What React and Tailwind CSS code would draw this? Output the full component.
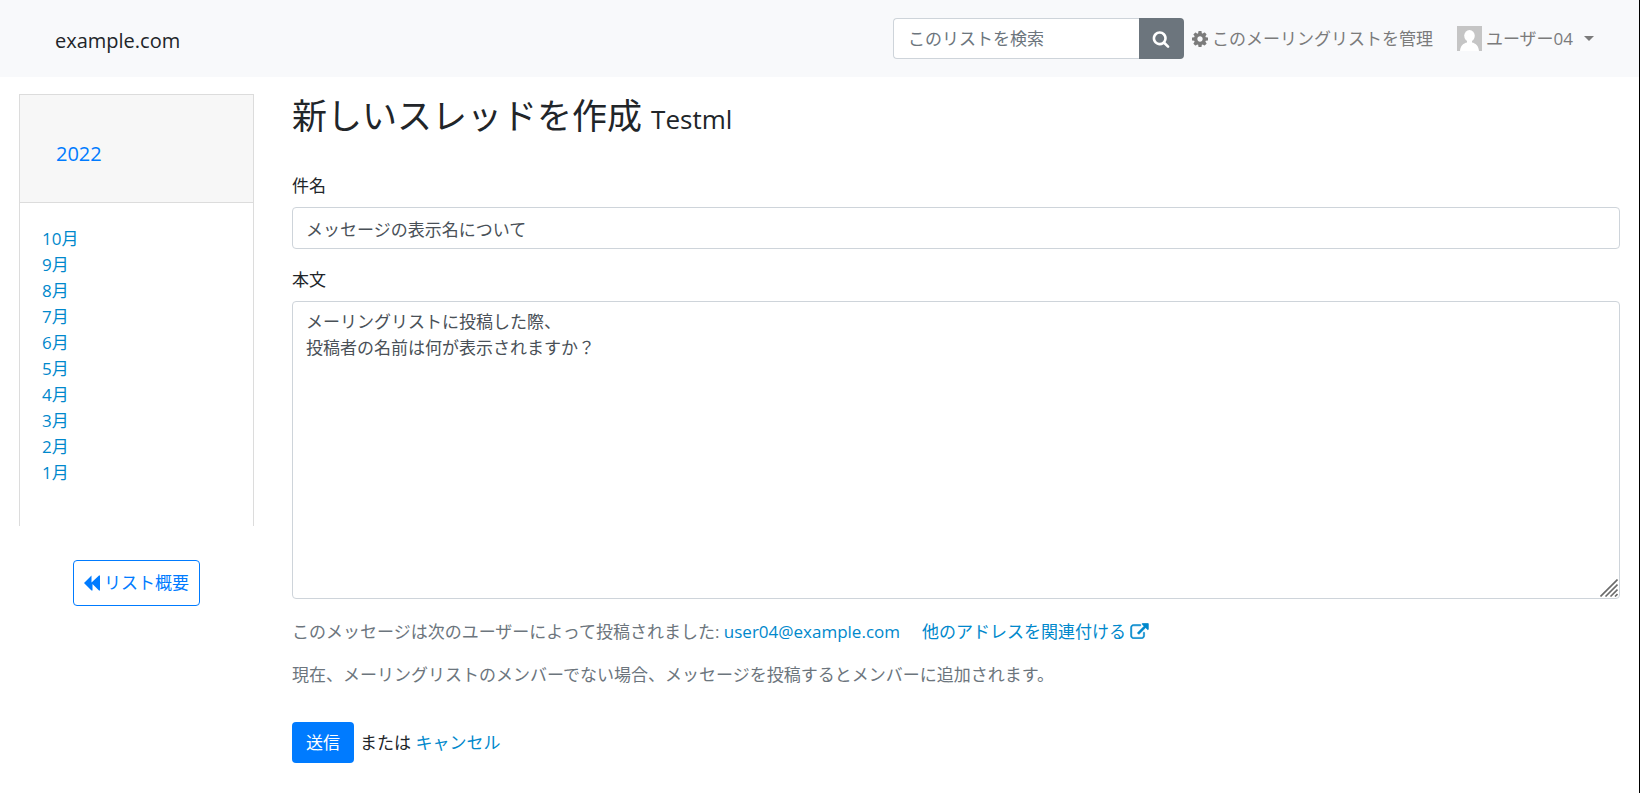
import React, { useState } from 'react';

const months = [10, 9, 8, 7, 6, 5, 4, 3, 2, 1];

const SearchIcon = () => (
    <svg viewBox="0 0 1792 1792" className="h-[18px] w-[18px]" fill="currentColor" aria-hidden="true">
        <path d="M1216 832q0-185-131.500-316.500t-316.500-131.500-316.500 131.500-131.500 316.500 131.500 316.500 316.500 131.500 316.500-131.500 131.500-316.500zm512 832q0 52-38 90t-90 38q-54 0-90-38l-343-342q-179 124-399 124-143 0-273.500-55.500t-225-150-150-225-55.500-273.500 55.500-273.500 150-225 225-150 273.500-55.500 273.500 55.500 225 150 150 225 55.500 273.500q0 220-124 399l343 343q37 37 37 90z" />
    </svg>
);

const CogIcon = () => (
    <svg viewBox="128 128 1536 1536" className="h-4 w-4" fill="currentColor" aria-hidden="true">
        <path d="M1152 896q0-106-75-181t-181-75-181 75-75 181 75 181 181 75 181-75 75-181zm512-109v222q0 12-8 23t-20 13l-185 28q-19 54-39 91 35 50 107 138 10 12 10 25t-9 23q-27 37-99 108t-94 71q-12 0-26-9l-138-108q-44 23-91 38-16 136-29 186-7 28-36 28h-222q-14 0-24.500-8.500t-11.500-21.500l-28-184q-49-16-90-37l-141 107q-10 9-25 9-14 0-25-11-126-114-165-168-7-10-7-23 0-12 8-23 15-21 51-66.500t54-70.500q-27-50-41-99l-183-27q-13-2-21-12.500t-8-23.500v-222q0-12 8-23t19-13l186-28q14-46 39-92-40-57-107-138-10-12-10-24 0-10 9-23 26-36 98.500-107.500t94.500-71.500q13 0 26 10l138 107q44-23 91-38 16-136 29-186 7-28 36-28h222q14 0 24.500 8.500t11.500 21.500l28 184q49 16 90 37l142-107q9-9 24-9 13 0 25 10 129 119 165 170 7 8 7 22 0 12-8 23-15 21-51 66.500t-54 70.500q26 50 41 98l183 28q13 2 21 12.500t8 23.500z" />
    </svg>
);

const ExternalIcon = () => (
    <svg viewBox="-30 -30 1852 1600" className="ml-1 inline-block h-4 w-[19px] align-[-1px]" fill="currentColor" stroke="currentColor" strokeWidth="50" aria-hidden="true">
        <path d="M1408 928v320q0 119-84.500 203.500t-203.500 84.500h-832q-119 0-203.500-84.500t-84.500-203.500v-832q0-119 84.500-203.500t203.500-84.500h704q14 0 23 9t9 23v64q0 14-9 23t-23 9h-704q-66 0-113 47t-47 113v832q0 66 47 113t113 47h832q66 0 113-47t47-113v-320q0-14 9-23t23-9h64q14 0 23 9t9 23zM1792 64v512q0 26-19 45t-45 19-45-19l-176-176-652 652q-10 10-23 10t-23-10l-114-114q-10-10-10-23t10-23l652-652-176-176q-19-19-19-45t19-45 45-19h512q26 0 45 19t19 45z" />
    </svg>
);

const BackwardIcon = () => (
    <svg viewBox="0 0 16 16" className="h-4 w-4" fill="currentColor" aria-hidden="true">
        <path d="M0 8 7.500 0.500V7.600L15 0.500H16V15.500H15L8.500 8.900V15.500H7.500Z" />
    </svg>
);

const Avatar = () => (
    <svg viewBox="0 0 25 25" className="h-[25px] w-[25px]" aria-hidden="true">
        <rect width="25" height="25" fill="#c5c5c5" />
        <ellipse cx="12.500" cy="9.800" rx="5.300" ry="5.800" fill="#fff" />
        <path d="M10 14h5v2.500c3.500.8 6.500 3 7 8.500H3c.5-5.500 3.500-7.700 7-8.500z" fill="#fff" />
    </svg>
);

const Header = () => (
    <header className="flex h-[77px] items-center bg-[#f8f9fb] pr-[45px] pl-[55px]">
        <a href="#" className="mr-auto pt-1 text-xl text-[#212529]">example.com</a>
        <form className="flex h-[41px]" role="search" onSubmit={(e) => e.preventDefault()}>
            <input
                type="search"
                aria-label="このリストを検索"
                placeholder="このリストを検索"
                className="w-[246px] rounded-l border border-r-0 border-[#ced4da] bg-white px-[14px] placeholder:text-[#6c757d] placeholder:opacity-100"
            />
            <button type="submit" aria-label="検索" className="flex w-[45px] items-center justify-center rounded-r bg-[#6c757d] text-white">
                <SearchIcon />
            </button>
        </form>
        <nav className="flex items-center text-[#7b7b7b]">
            <a href="#" className="ml-2 flex items-center gap-1">
                <CogIcon />
                このメーリングリストを管理
            </a>
            <button type="button" aria-haspopup="menu" className="ml-6 flex items-center">
                <Avatar />
                <span className="ml-1">ユーザー04</span>
                <span className="ml-[11px] border-x-[5px] border-t-[5px] border-x-transparent border-t-current" />
            </button>
        </nav>
    </header>
);

const Sidebar = () => (
    <aside className="mt-[17px] flex w-[235px] shrink-0 flex-col items-center">
        <div className="w-full border-x border-t border-[#dcdcdc]">
            <div className="border-b border-[#dcdcdc] bg-[#f7f7f7] px-9 pt-11 pb-[34px]">
                <a href="#" className="block text-xl leading-[29px] text-[#007bff]">2022</a>
            </div>
            <ul className="px-[22px] pt-[23px] pb-[40px]">
                {months.map((m) => (
                    <li key={m}>
                        <a href="#" className="text-[#0088cc]">{m}月</a>
                    </li>
                ))}
            </ul>
        </div>
        <a href="#" className="mt-[34px] flex h-[46px] items-center gap-1 rounded border border-[#007bff] px-[10px] text-[#007bff]">
            <BackwardIcon />
            リスト概要
        </a>
    </aside>
);

const NewThread = () => {
    const [subject, setSubject] = useState('メッセージの表示名について');
    const [body, setBody] = useState('メーリングリストに投稿した際、\n投稿者の名前は何が表示されますか？');

    return (
        <main className="min-w-0 flex-1 pt-[17px]">
            <h1 className="text-[35px] leading-[44px]">
                新しいスレッドを作成 <small className="text-[26px]">Testml</small>
            </h1>
            <form className="mt-8" onSubmit={(e) => e.preventDefault()}>
                <label htmlFor="subject" className="block">件名</label>
                <input
                    id="subject"
                    type="text"
                    value={subject}
                    onChange={(e) => setSubject(e.target.value)}
                    className="mt-2 block h-[42px] w-full rounded border border-[#ced4da] px-[13px] text-[#495057]"
                />
                <label htmlFor="body" className="mt-[18px] block">本文</label>
                <div className="relative mt-2">
                    <textarea
                        id="body"
                        value={body}
                        onChange={(e) => setBody(e.target.value)}
                        className="block h-[298px] w-full resize-none rounded border border-[#ced4da] px-[13px] py-[7px] text-[#495057]"
                    />
                    <svg viewBox="0 0 18 18" className="pointer-events-none absolute right-[2px] bottom-[2px] h-[18px] w-[18px]" stroke="#6b6b6b" strokeWidth="1.600" aria-hidden="true">
                        <path d="M.5 17.500 17.500.5M5.500 17.500l12-12M10.500 17.500l7-7M15 17.500l2.500-2.500" />
                    </svg>
                </div>
                <p className="mt-5 text-[#6c757d]">
                    このメッセージは次のユーザーによって投稿されました: <a href="#" className="text-[#0088cc]">user04@example.com</a>
                    <a href="#" className="ml-[22px] text-[#0088cc]">他のアドレスを関連付ける<ExternalIcon /></a>
                </p>
                <p className="mt-[17px] text-[#6c757d]">
                    現在、メーリングリストのメンバーでない場合、メッセージを投稿するとメンバーに追加されます。
                </p>
                <div className="mt-[34px] flex items-center gap-[6px]">
                    <button type="submit" className="h-[41px] rounded bg-[#007bff] px-[14px] text-white">送信</button>
                    <span>または <a href="#" className="text-[#0088cc]">キャンセル</a></span>
                </div>
            </form>
        </main>
    );
};

const App = () => (
    <div className="min-h-screen border-r border-black bg-white font-['Open_Sans','Noto_Sans_CJK_JP',sans-serif] text-[17px] leading-[26px] text-[#212529]">
        <Header />
        <div className="flex gap-[38px] pr-[19px] pl-[19px]">
            <Sidebar />
            <NewThread />
        </div>
    </div>
);

export default App;
